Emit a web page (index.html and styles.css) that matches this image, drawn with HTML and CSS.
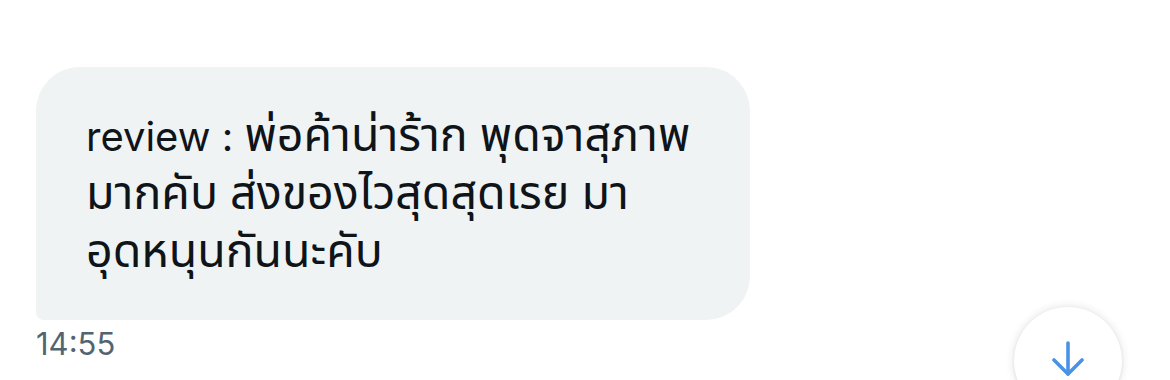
FILE: index.html
```html
<!DOCTYPE html>
<html lang="th">
<head>
<meta charset="utf-8">
<title>DM</title>
<link rel="stylesheet" href="styles.css">
</head>
<body>
<main class="chat">
  <div class="message">
    <div class="bubble">
      <span class="line">review : <span class="th">พ่อค้าน่าร้าก พุดจาสุภาพ</span></span>
      <span class="line"><span class="th">มากคับ ส่งของไวสุดสุดเรย มา</span></span>
      <span class="line"><span class="th">อุดหนุนกันนะคับ</span></span>
    </div>
    <div class="time">14:55</div>
  </div>
  <button class="scroll-down" aria-label="Scroll down">
    <svg viewBox="0 0 32 36" width="32" height="36" fill="none" stroke="currentColor" stroke-width="3.6" stroke-linecap="round" stroke-linejoin="round">
      <path d="M16 2 V33"/>
      <path d="M2 19 L16 33 L30 19"/>
    </svg>
  </button>
</main>
</body>
</html>
```
FILE: styles.css
```css
html, body {
  margin: 0;
  padding: 0;
  background: #ffffff;
}
body {
  width: 1170px;
  height: 380px;
  overflow: hidden;
  font-family: "Inter", "Noto Sans", "Liberation Sans", sans-serif;
  color: #0f1419;
}
.chat {
  position: relative;
  height: 380px;
  overflow: hidden;
  padding: 67px 0 0 36px;
  box-sizing: border-box;
}
.message {
  display: flex;
  flex-direction: column;
  align-items: flex-start;
}
.bubble {
  width: 714px;
  height: 253px;
  box-sizing: border-box;
  padding: 41px 40px 38px 50px;
  background: #eff3f4;
  border-radius: 44px 44px 44px 8px;
  font-size: 40px;
  line-height: 58px;
  display: flex;
  flex-direction: column;
}
.line {
  white-space: nowrap;
  height: 58px;
}
.th {
  font-family: "Noto Sans Thai", "Noto Sans", sans-serif;
  font-size: 46.5px;
  line-height: 1;
}
.time {
  margin-top: 6px;
  font-size: 31px;
  line-height: 36px;
  color: #536471;
}
.scroll-down {
  position: absolute;
  left: 1014px;
  top: 307px;
  width: 108px;
  height: 108px;
  border: none;
  border-radius: 50%;
  background: #ffffff;
  box-shadow: 0 0 10px rgba(0, 0, 0, 0.12), 0 1px 3px rgba(0, 0, 0, 0.08);
  color: #4a92e6;
  display: flex;
  align-items: flex-start;
  justify-content: center;
  padding: 34px 0 0;
  box-sizing: border-box;
}
.scroll-down svg {
  display: block;
}
```
